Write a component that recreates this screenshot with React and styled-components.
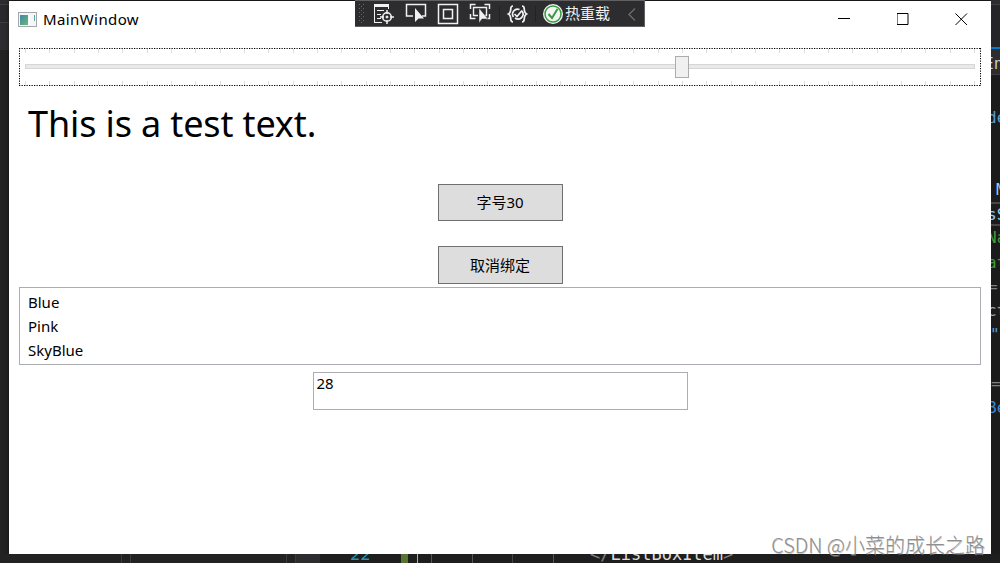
import React from "react";
import styled, { createGlobalStyle } from "styled-components";

const GlobalStyle = createGlobalStyle`
  * { box-sizing: border-box; }
  body {
    margin: 0;
    overflow: hidden;
    background: #1e1e1e;
    font-family: "Noto Sans", "Noto Sans CJK SC", sans-serif;
    color: #000;
  }
`;

const Desktop = styled.div`
  position: relative;
  display: grid;
  grid-template: 554px 9px / 9px 982px 9px;
  width: 1000px;
  height: 563px;
  overflow: hidden;
  background: #1e1e1e;
`;

const LeftStrip = styled.div`
  background: linear-gradient(#2d2d30 0 4px, #3f3f43 4px 5px, #2a2a2d 5px 22px, #3f3f43 22px 23px, #2d2d30 23px 50px, #222223 50px);
`;

const RightStrip = styled.div`
  overflow: hidden;
  font: 16px/24.2px "DejaVu Sans Mono", monospace;
  white-space: pre;
  background: linear-gradient(#2d2d30 0 4px, #3f3f43 4px 5px, #252528 5px 47px, #007acc 47px 49px, #2d2d30 49px 74px, #3f3f43 74px 75px, #1b1b1c 75px);
`;

const CodeLine = styled.div`
  height: ${(p) => p.$h || 24.2}px;
  margin-left: ${(p) => p.$x || 0}px;
  color: ${(p) => p.$c || "#808080"};
  ${(p) => p.$boxed && "border-top: 2px solid #464646; border-bottom: 2px solid #464646; line-height: 22px;"}
`;

const Window = styled.main`
  margin-top: 1px;
  background: #fff;
  box-shadow: 0 0 5px rgba(0, 0, 0, 0.5);
`;

const TitleBar = styled.header`
  display: flex;
  align-items: center;
  height: 36px;
  padding-left: 9px;
  svg { display: block; }
`;

const Title = styled.span`
  flex: 1;
  padding-left: 6px;
  font-size: 15px;
  line-height: 20px;
  letter-spacing: 0.4px;
`;

const CaptionButton = styled.span`
  display: flex;
  justify-content: center;
  width: 58.5px;
`;

const Content = styled.section`
  display: flex;
  flex-direction: column;
  align-items: center;
  padding: 11px 10px 0;
`;

const SliderBox = styled.div`
  width: 962px;
  height: 38px;
  svg { display: block; }
`;

const Sample = styled.p`
  align-self: stretch;
  height: 98px;
  margin: 0;
  padding: 13px 0 0 9px;
  font-size: 36px;
  line-height: 50px;
  white-space: nowrap;
  letter-spacing: ${(p) => p.$spacing}px;
`;

const Button = styled.button`
  width: 125px;
  height: ${(p) => p.$h}px;
  margin: 0 0 ${(p) => p.$gap}px;
  padding: 0 0 1px;
  border: 1px solid #707070;
  background: #ddd;
  color: #000;
  font: 15px/20px "Noto Sans", "Noto Sans CJK SC", sans-serif;
`;

const ListBox = styled.ul`
  align-self: stretch;
  height: 78px;
  margin: 0 0 7px;
  padding: 2px 8px;
  border: 1px solid #abadb3;
  list-style: none;
  font-size: 15px;
  line-height: 24px;
`;

const Input = styled.div`
  width: 375px;
  height: 38px;
  padding: 0 3px;
  border: 1px solid #abadb3;
  font-size: 15px;
  line-height: 20px;
`;

const Toolbar = styled.nav`
  position: absolute;
  top: 0;
  left: 355px;
  display: flex;
  width: 290px;
  height: 27px;
  background: #2d2d30;
  border: solid #606063;
  border-width: 1px 1px 1px 0;
  color: #f1f1f1;
  font-size: 15px;
  line-height: 25px;
  svg { display: block; flex: none; margin-top: -1px; }
`;

const HotReload = styled.span`
  width: 62px;
  padding-left: 1px;
  white-space: nowrap;
`;

const BottomStrip = styled.footer`
  grid-column: 1 / -1;
  display: flex;
  height: 9px;
  overflow: hidden;
  background: #1e1e1e;
  font: 17px/20px "DejaVu Sans Mono", monospace;
  white-space: pre;
`;

const Pane = styled.span`
  flex: none;
  width: ${(p) => p.$w}px;
  background: ${(p) => p.$bg || "transparent"};
  border-right: ${(p) => (p.$line ? "1px solid " + p.$line : "none")};
`;

const ClippedText = styled.span`
  flex: none;
  width: ${(p) => p.$w}px;
  margin-top: -10px;
  color: ${(p) => p.$c};
  font-style: ${(p) => (p.$italic ? "italic" : "normal")};
  b { font-weight: 400; color: #dcdcdc; }
`;

const Watermark = styled.div`
  position: absolute;
  right: 15px;
  top: 530px;
  color: #8f8f8f;
  font: 300 20px/30px "Noto Sans CJK SC", sans-serif;
  white-space: nowrap;
  text-shadow: 0.5px 0.5px 0 rgba(140, 140, 140, 0.5);
`;

const ticks = Array.from({ length: 40 }, (_, i) => Math.round(6 + i * 24.33) + 0.5);

function Slider() {
  return (
    <SliderBox>
      <svg width="962" height="38">
        {ticks.map((x) => (
          <path key={x} d={`M${x} 1v4M${x} 33v4`} stroke="#dedede" />
        ))}
        <path d="M0 .5h962M0 37.5h962M.5 0v38M961.5 0v38" fill="none" stroke="#000" strokeDasharray="1.25 1.25" />
        <rect x="6.5" y="16.5" width="949" height="4" fill="#e7eaea" stroke="#d6d6d6" />
        <rect x="656.5" y="8.5" width="13" height="21" fill="#f0f0f0" stroke="#acacac" />
      </svg>
    </SliderBox>
  );
}

function DebugToolbar() {
  return (
    <Toolbar>
      <svg width="187" height="27" fill="none" stroke="#f1f1f1">
        {[0, 1, 2, 3, 4].map((i) => (
          <path key={i} d={`M4 ${4.5 + i * 4}h1m3 0h1M6 ${6.5 + i * 4}h1`} stroke="#68686b" />
        ))}
        <path d="M19 5.5h15" strokeWidth="3" />
        <path d="M19.5 6v17M33.5 6v3M22 10.5h7M22 14.5h4M22 18.5h4M19 22.5h8" />
        <circle cx="32" cy="17" r="4.3" strokeWidth="1.6" />
        <path d="M32 10v4m0 6v4m-7-7h4m6 0h4" strokeWidth="1.5" />
        <circle cx="32" cy="17" r="1" fill="#f1f1f1" />
        <path d="M58 16h-6.5V4.500h19V16H67" strokeWidth="1.5" />
        <path d="M60 8v14l3.500-3.500H69z" fill="#f1f1f1" stroke="none" />
        <path d="M83.5 4.5h19v19h-19zM88.5 9.5h9v9h-9z" strokeWidth="1.5" />
        <path d="M115.500 9V4.500h5M129.500 4.500h5V9M115.500 14v4.500h5M131 18.500h3.500V14" strokeWidth="1.5" />
        <path d="M123 15.500h-4.500v-8h13v8h-2" strokeWidth="1.400" />
        <path d="M124 8v15l3-4h6z" fill="#f1f1f1" stroke="#2d2d30" strokeWidth="0.500" />
        <path d="M144.500 6v16M180.500 6v16" stroke="#222225" />
        <path d="M158 6c-3 0-2 3-2.500 5-.3 1.500-1 2.500-2 3 1 .5 1.700 1.500 2 3 .5 2-.5 5 2.500 5M167 6c3 0 2 3 2.500 5 .3 1.500 1 2.500 2 3-1 .5-1.700 1.500-2 3-.5 2 .5 5-2.500 5" strokeWidth="1.700" />
        <path d="M158.500 17a5 5 0 0 1 6-7.500M167 11a5 5 0 0 1-7 7M159.500 14l2.500 2.500 5-6" strokeWidth="1.700" />
      </svg>
      <svg width="22" height="27" fill="none">
        <circle cx="11" cy="14" r="10" fill="#f4f4f4" />
        <circle cx="11" cy="14" r="8" stroke="#389b40" strokeWidth="1.500" />
        <path d="M6.500 14l3.500 4 5.500-9" stroke="#389b40" strokeWidth="2" />
      </svg>
      <HotReload>热重载</HotReload>
      <svg width="14" height="27" fill="none" stroke="#6d6d70" strokeWidth="1.300">
        <path d="M9 8.500l-6 6 6 6" />
      </svg>
    </Toolbar>
  );
}

export default function App() {
  return (
    <Desktop>
      <GlobalStyle />
      <LeftStrip />
      <Window>
        <TitleBar>
          <svg width="19" height="15">
            <defs>
              <linearGradient id="pane" x2="1" y2="1">
                <stop stopColor="#4585a8" />
                <stop offset="1" stopColor="#68ba76" />
              </linearGradient>
            </defs>
            <rect x="0.500" y="0.500" width="18" height="14" fill="#f5f6f6" stroke="#a2a8ad" />
            <rect x="2" y="3" width="8" height="10" fill="url(#pane)" />
            <path d="M11.500 3v10" stroke="#fff" />
            <path d="M16.500 3v6" stroke="#5ba69b" />
          </svg>
          <Title>MainWindow</Title>
          <CaptionButton>
            <svg width="13" height="13"><path d="M0 5.500h12" stroke="#000" /></svg>
          </CaptionButton>
          <CaptionButton>
            <svg width="13" height="13"><path d="M-.5.500h11v11h-11z" transform="translate(.5)" fill="none" stroke="#000" /></svg>
          </CaptionButton>
          <CaptionButton>
            <svg width="13" height="13"><path d="M.5.500l11.500 11.500m0-11.500L.5 12" stroke="#000" /></svg>
          </CaptionButton>
        </TitleBar>
        <Content>
          <Slider />
          <Sample $spacing={-0.13}>This is a test text.</Sample>
          <Button $h={37} $gap={25}>字号30</Button>
          <Button $h={38} $gap={3}>取消绑定</Button>
          <ListBox>
            <li>Blue</li>
            <li>Pink</li>
            <li>SkyBlue</li>
          </ListBox>
          <Input>28</Input>
        </Content>
      </Window>
      <RightStrip>
        <CodeLine $h={52} />
        <CodeLine $h={54} $x={-7} $c="#c8c8c8">En</CodeLine>
        <CodeLine $h={72} $x={-4} $c="#569cd6">de</CodeLine>
        <CodeLine $x={5} $c="#92caf4">M</CodeLine>
        <CodeLine $boxed $x={-4} $c="#92caf4">sS</CodeLine>
        <CodeLine $x={-4} $c="#419b37">Na</CodeLine>
        <CodeLine $x={-4} $c="#419b37">at</CodeLine>
        <CodeLine $x={-3}>="</CodeLine>
        <CodeLine $x={-4} $c="#a0a0a0">ct</CodeLine>
        <CodeLine $x={-1} $c="#569cd6">"</CodeLine>
        <CodeLine />
        <CodeLine>=</CodeLine>
        <CodeLine $x={-4} $c="#3c86d6">Be</CodeLine>
      </RightStrip>
      <BottomStrip>
        <Pane $w={122} $bg="#222223" $line="#3a3a3f" />
        <Pane $w={9} $bg="#222223" $line="#3a3a3f" />
        <Pane $w={156} $bg="#222223" $line="#3a3a3f" />
        <Pane $w={9} $bg="#222223" $line="#3a3a3f" />
        <Pane $w={24} $bg="#2d2d30" />
        <Pane $w={31} />
        <ClippedText $w={50} $c="#2b91af" $italic>22</ClippedText>
        <Pane $w={7} $bg="#577430" />
        <Pane $w={10} $line="#b0b0b0" />
        <Pane $w={14} $line="#555" />
        <Pane $w={41} $line="#555" />
        <Pane $w={40} $line="#444" />
        <Pane $w={41} $line="#555" />
        <Pane $w={36} />
        <ClippedText $w={160} $c="#808080">&lt;/<b>ListBoxItem</b>&gt;</ClippedText>
      </BottomStrip>
      <DebugToolbar />
      <Watermark>CSDN @小菜的成长之路</Watermark>
    </Desktop>
  );
}
